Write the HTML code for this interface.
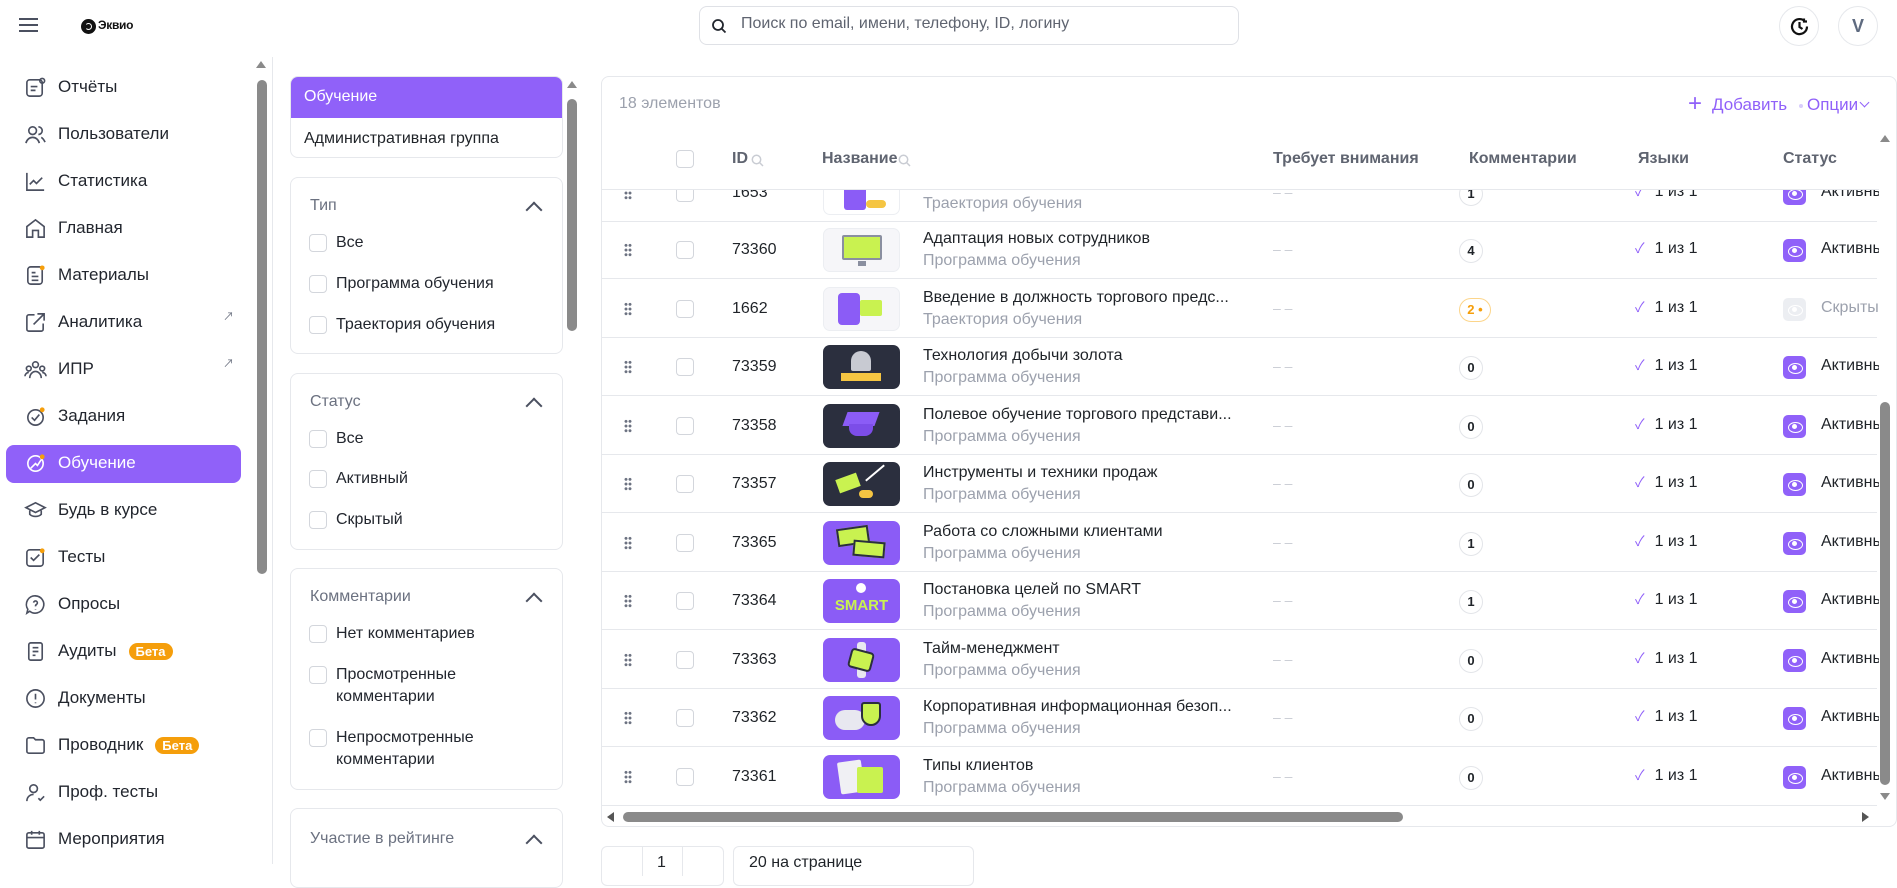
<!DOCTYPE html>
<html><head><meta charset="utf-8">
<style>
*{box-sizing:border-box;margin:0;padding:0}
body{width:1897px;height:864px;overflow:hidden;background:#fff;font-family:"Liberation Sans","Noto Sans CJK SC",sans-serif;color:#1f2328;position:relative}
.a{position:absolute}
.nav{position:absolute;left:24px;display:flex;align-items:center;font-size:17px;color:#22262e;height:38px}
.nav svg{width:23px;height:23px;margin-right:11px;stroke:#4b5060;fill:none;stroke-width:1.7}
.beta{background:#f59e0b;color:#fff;font-size:13px;font-weight:bold;border-radius:9px;padding:1px 7px;margin-left:12px}
.card{position:absolute;left:290px;width:273px;border:1px solid #e6e8ec;border-radius:8px;background:#fff}
.fh{position:absolute;left:19px;font-size:16px;color:#6b7180}
.chev{position:absolute;right:22px;width:12px;height:12px;border-left:2px solid #4b5060;border-top:2px solid #4b5060;transform:rotate(45deg)}
.cb{position:absolute;width:18px;height:18px;border:1px solid #d3d6dc;border-radius:4px;background:#fff}
.fl{position:absolute;left:45px;font-size:16px;color:#22262e;line-height:22px}
.th{position:absolute;top:150px;font-size:16px;font-weight:bold;color:#5f6470}
.row{position:absolute;left:602px;width:1275px;height:58px;border-bottom:1px solid #e6e8ec}
.row>*{position:absolute}
.drag{left:22px;top:22px;width:8px;height:14px;background:radial-gradient(circle,#6b7180 1.3px,transparent 1.6px) 0 0/4px 4.7px}
.rcb{left:74px;top:20px;width:18px;height:18px;border:1px solid #d3d6dc;border-radius:4px}
.id{left:130px;top:20px;font-size:16px}
.th2{left:221px;top:7px;width:77px;height:44px;border-radius:7px;overflow:hidden}
.t1{left:321px;top:9px;font-size:16px;white-space:nowrap}
.t2{left:321px;top:31px;font-size:16px;color:#9ca1ad;white-space:nowrap}
.dash{left:671px;top:20px;color:#c9ccd3;font-size:14px}
.badge{left:857px;top:18px;width:24px;height:24px;border:1px solid #e3e5e9;border-radius:12px;font-size:13px;font-weight:bold;text-align:center;line-height:22px}
.lang{left:1033px;top:17px;font-size:16px;white-space:nowrap}
.lang b{color:#9061f9;font-weight:normal;margin-right:10px;font-size:14px}
.st{left:1181px;top:18px;width:23px;height:23px;border-radius:5px;background:#9061f9}
.st::after{content:"";position:absolute;left:5px;top:7px;width:13px;height:9px;border:1.6px solid #fff;border-radius:50%}
.st::before{content:"";position:absolute;left:9px;top:9px;width:5px;height:5px;background:#fff;border-radius:50%}
.stt{left:1219px;top:19px;font-size:16px;white-space:nowrap}
</style></head><body>

<!-- top bar -->
<div class="a" style="left:19px;top:18px;width:19px;height:2px;background:#4b5060;box-shadow:0 6px 0 #4b5060,0 12px 0 #4b5060"></div>
<div class="a" style="left:81px;top:19px;width:15px;height:15px;border-radius:50%;background:#111"></div>
<div class="a" style="left:85px;top:23px;width:7px;height:7px;border-radius:50%;border:1.5px solid #fff;border-left-color:transparent"></div>
<div class="a" style="left:98px;top:18px;font-size:12px;font-weight:bold;color:#111;letter-spacing:-0.3px">Эквио</div>
<div class="a" style="left:699px;top:6px;width:540px;height:39px;border:1px solid #dfe1e6;border-radius:8px"></div>
<svg class="a" style="left:711px;top:18px" width="16" height="16" viewBox="0 0 16 16" fill="none" stroke="#22262e" stroke-width="1.8"><circle cx="7" cy="7" r="5"/><path d="M11 11l3.5 3.5"/></svg>
<div class="a" style="left:741px;top:15px;font-size:16px;color:#5f6470">Поиск по email, имени, телефону, ID, логину</div>
<div class="a" style="left:1779px;top:6px;width:40px;height:40px;border:1px solid #e6e8ec;border-radius:50%"></div>
<svg class="a" style="left:1789px;top:16px" width="21" height="21" viewBox="0 0 21 21" fill="none" stroke="#111" stroke-width="2.2"><path d="M18 10.5A7.5 7.5 0 1 1 15.5 5"/><path d="M10.5 6v5l3 2"/><path d="M15 2.5v3h3"/></svg>
<div class="a" style="left:1838px;top:6px;width:40px;height:40px;border:1px solid #e6e8ec;border-radius:50%;text-align:center;line-height:38px;font-size:18px;font-weight:bold;color:#5f6b80">V</div>

<!-- sidebar -->
<div class="a" style="left:6px;top:445px;width:235px;height:38px;background:#9061f9;border-radius:8px"></div>
<div class="nav" style="top:68px"><svg viewBox="0 0 24 24"><rect x="3" y="4" width="16" height="17" rx="3"/><path d="M7 11h7M7 15h5"/><circle cx="19" cy="5" r="2.5"/></svg>Отчёты</div>
<div class="nav" style="top:115px"><svg viewBox="0 0 24 24"><circle cx="9" cy="8" r="4"/><path d="M2 21c1-4 4-6 7-6s6 2 7 6M15 4a4 4 0 0 1 0 8M18 15c2 1 3 3 4 5"/></svg>Пользователи</div>
<div class="nav" style="top:162px"><svg viewBox="0 0 24 24"><path d="M3 3v18h18M6 15l4-4 3 3 6-6"/></svg>Статистика</div>
<div class="nav" style="top:209px"><svg viewBox="0 0 24 24"><path d="M3 21V10l9-7 9 7v11h-6v-7H9v7z"/></svg>Главная</div>
<div class="nav" style="top:256px"><svg viewBox="0 0 24 24"><rect x="4" y="3" width="15" height="18" rx="3"/><path d="M8 9h4M8 13h7M8 17h7"/><circle cx="19" cy="4" r="2.5" fill="#f59e0b" stroke="none"/></svg>Материалы</div>
<div class="nav" style="top:303px"><svg viewBox="0 0 24 24"><path d="M20 13v6a2 2 0 0 1-2 2H5a2 2 0 0 1-2-2V6a2 2 0 0 1 2-2h6M14 3h7v7M10 14L21 3"/></svg>Аналитика</div>
<div class="a" style="left:223px;top:308px;font-size:11px;color:#6b7180">↗</div>
<div class="nav" style="top:350px"><svg viewBox="0 0 24 24"><circle cx="12" cy="7" r="3"/><circle cx="5" cy="11" r="2.5"/><circle cx="19" cy="11" r="2.5"/><path d="M6 21c0-4 3-7 6-7s6 3 6 7M1 19c0-2 2-4 4-4M23 19c0-2-2-4-4-4"/></svg>ИПР</div>
<div class="a" style="left:223px;top:355px;font-size:11px;color:#6b7180">↗</div>
<div class="nav" style="top:397px"><svg viewBox="0 0 24 24"><circle cx="12" cy="13" r="8"/><path d="M8 13l3 3 5-6"/><circle cx="19" cy="5" r="2.5" fill="#f59e0b" stroke="none"/></svg>Задания</div>
<div class="nav" style="top:444px;color:#fff"><svg viewBox="0 0 24 24" style="stroke:#fff"><circle cx="12" cy="12" r="8"/><path d="M7 17l5-5 2 2 4-6"/><circle cx="19" cy="5" r="2.5" fill="#f59e0b" stroke="none"/></svg>Обучение</div>
<div class="nav" style="top:491px"><svg viewBox="0 0 24 24"><path d="M2 9l10-5 10 5-10 5z M6 11v5c3 3 9 3 12 0v-5"/></svg>Будь в курсе</div>
<div class="nav" style="top:538px"><svg viewBox="0 0 24 24"><rect x="3" y="4" width="17" height="17" rx="3"/><path d="M7 12l3 3 6-6"/><circle cx="19" cy="5" r="2.5" fill="#f59e0b" stroke="none"/></svg>Тесты</div>
<div class="nav" style="top:585px"><svg viewBox="0 0 24 24"><path d="M12 3a9 9 0 1 1-6 16l-3 2 1-4A9 9 0 0 1 12 3z"/><path d="M10 10a2 2 0 1 1 3 2c-1 .5-1 1-1 2M12 17v.5"/></svg>Опросы</div>
<div class="nav" style="top:632px"><svg viewBox="0 0 24 24"><rect x="5" y="3" width="14" height="18" rx="2"/><path d="M9 8h6M9 12h6M9 16h3"/></svg>Аудиты<span class="beta">Бета</span></div>
<div class="nav" style="top:679px"><svg viewBox="0 0 24 24"><circle cx="12" cy="12" r="9"/><path d="M12 7v6M12 16v1"/></svg>Документы</div>
<div class="nav" style="top:726px"><svg viewBox="0 0 24 24"><path d="M3 6a2 2 0 0 1 2-2h5l2 2h7a2 2 0 0 1 2 2v10a2 2 0 0 1-2 2H5a2 2 0 0 1-2-2z"/></svg>Проводник<span class="beta">Бета</span></div>
<div class="nav" style="top:773px"><svg viewBox="0 0 24 24"><circle cx="10" cy="8" r="4"/><path d="M3 21c0-4 3-7 7-7M15 18l2 2 4-4"/></svg>Проф. тесты</div>
<div class="nav" style="top:820px"><svg viewBox="0 0 24 24"><rect x="3" y="5" width="18" height="16" rx="2"/><path d="M3 10h18M8 3v4M16 3v4"/></svg>Мероприятия</div>
<!-- sidebar scrollbar -->
<div class="a" style="left:256px;top:61px;width:0;height:0;border:5px solid transparent;border-bottom:7px solid #8a8a8a;border-top:0"></div>
<div class="a" style="left:257px;top:80px;width:10px;height:494px;background:#8a8a8a;border-radius:5px"></div>
<div class="a" style="left:272px;top:57px;width:1px;height:807px;background:#e6e8ec"></div>

<!-- filter column -->
<div class="card" style="top:76px;height:82px;overflow:hidden">
  <div class="a" style="left:0;top:0;width:273px;height:41px;background:#9061f9;color:#fff;font-size:16px;padding:11px 13px">Обучение</div>
  <div class="a" style="left:13px;top:53px;font-size:16px">Административная группа</div>
</div>
<div class="card" style="top:177px;height:177px">
  <div class="fh" style="top:19px">Тип</div><div class="chev" style="top:26px"></div>
  <div class="cb" style="left:18px;top:56px"></div><div class="fl" style="top:54px">Все</div>
  <div class="cb" style="left:18px;top:97px"></div><div class="fl" style="top:95px">Программа обучения</div>
  <div class="cb" style="left:18px;top:138px"></div><div class="fl" style="top:136px">Траектория обучения</div>
</div>
<div class="card" style="top:373px;height:177px">
  <div class="fh" style="top:19px">Статус</div><div class="chev" style="top:26px"></div>
  <div class="cb" style="left:18px;top:56px"></div><div class="fl" style="top:54px">Все</div>
  <div class="cb" style="left:18px;top:96px"></div><div class="fl" style="top:94px">Активный</div>
  <div class="cb" style="left:18px;top:137px"></div><div class="fl" style="top:135px">Скрытый</div>
</div>
<div class="card" style="top:568px;height:222px">
  <div class="fh" style="top:19px">Комментарии</div><div class="chev" style="top:26px"></div>
  <div class="cb" style="left:18px;top:56px"></div><div class="fl" style="top:54px">Нет комментариев</div>
  <div class="cb" style="left:18px;top:97px"></div><div class="fl" style="top:95px">Просмотренные<br>комментарии</div>
  <div class="cb" style="left:18px;top:160px"></div><div class="fl" style="top:158px">Непросмотренные<br>комментарии</div>
</div>
<div class="card" style="top:808px;height:80px">
  <div class="fh" style="top:21px">Участие в рейтинге</div><div class="chev" style="top:28px"></div>
</div>
<div class="a" style="left:567px;top:81px;width:0;height:0;border:5px solid transparent;border-bottom:7px solid #8a8a8a;border-top:0"></div>
<div class="a" style="left:567px;top:99px;width:10px;height:232px;background:#8a8a8a;border-radius:5px"></div>

<!-- table card -->
<div class="a" style="left:601px;top:76px;width:1296px;height:751px;border:1px solid #e6e8ec;border-radius:8px;background:#fff"></div>

<!-- partial first row clipped under header -->
<div class="a" style="left:602px;top:190px;width:1277px;height:32px;overflow:hidden">
  <div style="position:absolute;left:-602px;top:-190px;width:1897px;height:300px">
  <div class="row" style="top:164px"><div class="drag"></div><div class="rcb"></div><div class="id">1653</div>
    <div class="th2" style="border:1px solid #eceef2;background:#fff"><div class="a" style="left:20px;top:14px;width:22px;height:24px;background:#8b5cf6;border-radius:3px"></div><div class="a" style="left:42px;top:28px;width:20px;height:8px;background:#f5c542;border-radius:4px"></div></div>
    <div class="t1">Копия</div><div class="t2">Траектория обучения</div><div class="dash">– –</div><div class="badge">1</div><div class="lang"><b>✓</b>1 из 1</div><div class="st"></div><div class="stt">Активные</div></div>
  </div>
</div>

<div class="a" style="left:602px;top:221px;width:1277px;height:590px;overflow:hidden">
 <div style="position:absolute;left:-602px;top:-221px">
  <div class="row" style="top:221px"><div class="drag"></div><div class="rcb"></div><div class="id">73360</div>
    <div class="th2" style="border:1px solid #eceef2;background:#f6f6f9"><div class="a" style="left:18px;top:6px;width:40px;height:25px;background:#c9f250;border:2px solid #8a8fa0;border-radius:2px"></div><div class="a" style="left:34px;top:32px;width:8px;height:5px;background:#8a8fa0"></div></div>
    <div class="t1">Адаптация новых сотрудников</div><div class="t2">Программа обучения</div><div class="dash">– –</div><div class="badge">4</div><div class="lang"><b>✓</b>1 из 1</div><div class="st"></div><div class="stt">Активные</div></div>
  <div class="row" style="top:280px"><div class="drag"></div><div class="rcb"></div><div class="id">1662</div>
    <div class="th2" style="border:1px solid #eceef2;background:#f6f6f9"><div class="a" style="left:14px;top:5px;width:22px;height:32px;background:#8b5cf6;border-radius:4px"></div><div class="a" style="left:36px;top:12px;width:22px;height:16px;background:#c9f250;border-radius:2px"></div></div>
    <div class="t1">Введение в должность торгового предс...</div><div class="t2">Траектория обучения</div><div class="dash">– –</div>
    <div class="badge" style="border-color:#fcd58a;color:#f59e0b;width:32px">2 •</div><div class="lang"><b>✓</b>1 из 1</div>
    <div class="st" style="background:#eceef2"></div><div class="stt" style="color:#9ca1ad">Скрытые</div></div>
  <div class="row" style="top:338px"><div class="drag"></div><div class="rcb"></div><div class="id">73359</div>
    <div class="th2" style="background:#2b2f3e"><div class="a" style="left:28px;top:6px;width:20px;height:20px;border-radius:10px 10px 2px 2px;background:#c8cad2"></div><div class="a" style="left:18px;top:28px;width:40px;height:8px;background:#f5c542"></div></div>
    <div class="t1">Технология добычи золота</div><div class="t2">Программа обучения</div><div class="dash">– –</div><div class="badge">0</div><div class="lang"><b>✓</b>1 из 1</div><div class="st"></div><div class="stt">Активные</div></div>
  <div class="row" style="top:397px"><div class="drag"></div><div class="rcb"></div><div class="id">73358</div>
    <div class="th2" style="background:#2b2f3e"><div class="a" style="left:22px;top:8px;width:32px;height:14px;background:#8b5cf6;transform:skewX(-20deg)"></div><div class="a" style="left:26px;top:20px;width:24px;height:12px;background:#7c4de8;border-radius:0 0 8px 8px"></div></div>
    <div class="t1">Полевое обучение торгового представи...</div><div class="t2">Программа обучения</div><div class="dash">– –</div><div class="badge">0</div><div class="lang"><b>✓</b>1 из 1</div><div class="st"></div><div class="stt">Активные</div></div>
  <div class="row" style="top:455px"><div class="drag"></div><div class="rcb"></div><div class="id">73357</div>
    <div class="th2" style="background:#2b2f3e"><div class="a" style="left:14px;top:14px;width:22px;height:14px;background:#c9f250;transform:rotate(-20deg)"></div><div class="a" style="left:36px;top:28px;width:14px;height:8px;background:#f5c542;border-radius:4px"></div><div class="a" style="left:40px;top:10px;width:24px;height:2px;background:#fff;transform:rotate(-40deg)"></div></div>
    <div class="t1">Инструменты и техники продаж</div><div class="t2">Программа обучения</div><div class="dash">– –</div><div class="badge">0</div><div class="lang"><b>✓</b>1 из 1</div><div class="st"></div><div class="stt">Активные</div></div>
  <div class="row" style="top:514px"><div class="drag"></div><div class="rcb"></div><div class="id">73365</div>
    <div class="th2" style="background:#8b5cf6"><div class="a" style="left:14px;top:6px;width:32px;height:18px;background:#c9f250;border:2px solid #2b2f3e;transform:rotate(-8deg)"></div><div class="a" style="left:30px;top:20px;width:32px;height:16px;background:#c9f250;border:2px solid #2b2f3e;transform:rotate(5deg)"></div></div>
    <div class="t1">Работа со сложными клиентами</div><div class="t2">Программа обучения</div><div class="dash">– –</div><div class="badge">1</div><div class="lang"><b>✓</b>1 из 1</div><div class="st"></div><div class="stt">Активные</div></div>
  <div class="row" style="top:572px"><div class="drag"></div><div class="rcb"></div><div class="id">73364</div>
    <div class="th2" style="background:#8b5cf6"><div class="a" style="left:0;top:18px;width:77px;text-align:center;color:#c9f250;font-weight:bold;font-size:15px">SMART</div><div class="a" style="left:33px;top:4px;width:10px;height:10px;border-radius:50%;background:#fff"></div></div>
    <div class="t1">Постановка целей по SMART</div><div class="t2">Программа обучения</div><div class="dash">– –</div><div class="badge">1</div><div class="lang"><b>✓</b>1 из 1</div><div class="st"></div><div class="stt">Активные</div></div>
  <div class="row" style="top:631px"><div class="drag"></div><div class="rcb"></div><div class="id">73363</div>
    <div class="th2" style="background:#8b5cf6"><div class="a" style="left:34px;top:4px;width:9px;height:36px;background:#e8e8f0;border-radius:3px"></div><div class="a" style="left:26px;top:12px;width:24px;height:20px;background:#c9f250;border:2px solid #2b2f3e;border-radius:4px;transform:rotate(15deg)"></div></div>
    <div class="t1">Тайм-менеджмент</div><div class="t2">Программа обучения</div><div class="dash">– –</div><div class="badge">0</div><div class="lang"><b>✓</b>1 из 1</div><div class="st"></div><div class="stt">Активные</div></div>
  <div class="row" style="top:689px"><div class="drag"></div><div class="rcb"></div><div class="id">73362</div>
    <div class="th2" style="background:#8b5cf6"><div class="a" style="left:12px;top:14px;width:30px;height:20px;background:#e8e8f0;border-radius:10px"></div><div class="a" style="left:38px;top:6px;width:20px;height:24px;background:#c9f250;border:2px solid #2b2f3e;border-radius:3px 3px 10px 10px"></div></div>
    <div class="t1">Корпоративная информационная безоп...</div><div class="t2">Программа обучения</div><div class="dash">– –</div><div class="badge">0</div><div class="lang"><b>✓</b>1 из 1</div><div class="st"></div><div class="stt">Активные</div></div>
  <div class="row" style="top:748px"><div class="drag"></div><div class="rcb"></div><div class="id">73361</div>
    <div class="th2" style="background:#8b5cf6"><div class="a" style="left:16px;top:6px;width:24px;height:32px;background:#f0f0f4;border-radius:2px;transform:rotate(-8deg)"></div><div class="a" style="left:34px;top:12px;width:26px;height:26px;background:#c9f250;border-radius:2px"></div></div>
    <div class="t1">Типы клиентов</div><div class="t2">Программа обучения</div><div class="dash">– –</div><div class="badge">0</div><div class="lang"><b>✓</b>1 из 1</div><div class="st"></div><div class="stt">Активные</div></div>
 </div>
</div>

<!-- table header -->
<div class="a" style="left:619px;top:95px;font-size:16px;color:#9ca1ad">18 элементов</div>
<div class="a" style="left:1688px;top:92px;font-size:24px;color:#9061f9;line-height:24px">+</div>
<div class="a" style="left:1712px;top:95px;font-size:17px;color:#9061f9">Добавить</div>
<div class="a" style="left:1799px;top:104px;width:4px;height:4px;border-radius:2px;background:#d8cdfb"></div>
<div class="a" style="left:1807px;top:95px;font-size:17px;color:#9061f9">Опции</div>
<div class="a" style="left:1861px;top:99px;width:7px;height:7px;border-right:1.5px solid #9061f9;border-bottom:1.5px solid #9061f9;transform:rotate(45deg)"></div>
<div class="a" style="left:602px;top:189px;width:1277px;height:1px;background:#e6e8ec"></div>
<div class="a" style="left:676px;top:150px;width:18px;height:18px;border:1px solid #d3d6dc;border-radius:4px"></div>
<div class="th" style="left:732px">ID</div>
<svg class="a" style="left:751px;top:154px" width="13" height="13" viewBox="0 0 13 13" fill="none" stroke="#c9ccd3" stroke-width="1.5"><circle cx="5.5" cy="5.5" r="4.2"/><path d="M8.5 8.5l3.5 3.5"/></svg>
<div class="th" style="left:822px">Название</div>
<svg class="a" style="left:898px;top:154px" width="13" height="13" viewBox="0 0 13 13" fill="none" stroke="#c9ccd3" stroke-width="1.5"><circle cx="5.5" cy="5.5" r="4.2"/><path d="M8.5 8.5l3.5 3.5"/></svg>
<div class="th" style="left:1273px">Требует внимания</div>
<div class="th" style="left:1469px">Комментарии</div>
<div class="th" style="left:1638px">Языки</div>
<div class="th" style="left:1783px">Статус</div>

<!-- right scrollbar -->
<div class="a" style="left:1880px;top:135px;width:0;height:0;border:5px solid transparent;border-bottom:7px solid #8a8a8a;border-top:0"></div>
<div class="a" style="left:1880px;top:402px;width:10px;height:383px;background:#8a8a8a;border-radius:5px"></div>
<div class="a" style="left:1880px;top:793px;width:0;height:0;border:5px solid transparent;border-top:7px solid #8a8a8a;border-bottom:0"></div>
<!-- horizontal scrollbar -->
<div class="a" style="left:607px;top:812px;width:0;height:0;border:5px solid transparent;border-right:7px solid #555;border-left:0"></div>
<div class="a" style="left:623px;top:812px;width:780px;height:10px;background:#8a8a8a;border-radius:5px"></div>
<div class="a" style="left:1862px;top:812px;width:0;height:0;border:5px solid transparent;border-left:7px solid #555;border-right:0"></div>

<!-- pagination -->
<div class="a" style="left:601px;top:846px;width:123px;height:40px;border:1px solid #e6e8ec;border-radius:6px"></div>
<div class="a" style="left:642px;top:846px;width:1px;height:30px;background:#e6e8ec"></div>
<div class="a" style="left:682px;top:846px;width:1px;height:30px;background:#e6e8ec"></div>
<div class="a" style="left:657px;top:854px;font-size:16px">1</div>
<div class="a" style="left:733px;top:846px;width:241px;height:40px;border:1px solid #e6e8ec;border-radius:6px"></div>
<div class="a" style="left:749px;top:854px;font-size:16px">20 на странице</div>
</body></html>
